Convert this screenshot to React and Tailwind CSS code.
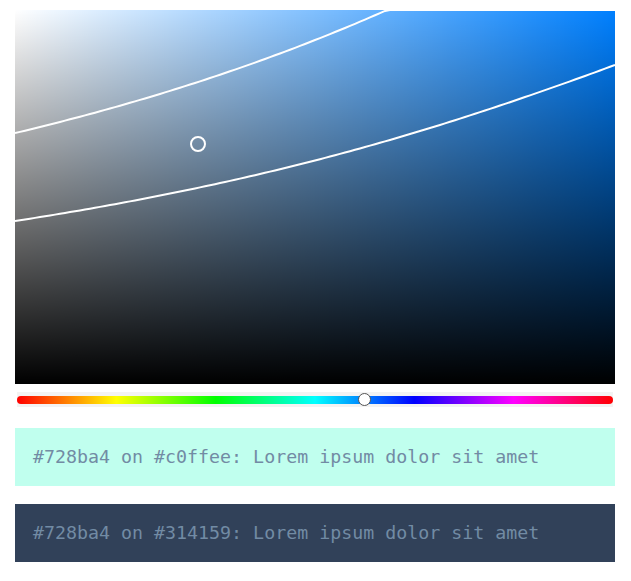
import React from "react";

const W = 600;
const H = 374;
const HUE = 210;

function lin(c) {
  return c <= 0.04045 ? c / 12.92 : Math.pow((c + 0.055) / 1.055, 2.4);
}
function lum(r, g, b) {
  return 0.2126 * lin(r) + 0.7152 * lin(g) + 0.0722 * lin(b);
}
function hsv(h, s, v) {
  const f = (n) => {
    const k = (n + h / 60) % 6;
    return v - v * s * Math.max(0, Math.min(k, 4 - k, 1));
  };
  return [f(5), f(3), f(1)];
}
const Lt = lum(0x72 / 255, 0x8b / 255, 0xa4 / 255);

function curve(target) {
  const pts = [];
  for (let i = 0; i <= 120; i++) {
    const s = i / 120;
    let lo = 0, hi = 1;
    for (let k = 0; k < 40; k++) {
      const m = (lo + hi) / 2;
      const [r, g, b] = hsv(HUE, s, m);
      if (lum(r, g, b) < target) lo = m;
      else hi = m;
    }
    const v = (lo + hi) / 2;
    pts.push([s * W, (1 - v) * H]);
  }
  return "M" + pts.map((p) => p[0].toFixed(2) + " " + p[1].toFixed(2)).join(" L");
}

const upper = curve(1.54 * (Lt + 0.05) - 0.05);
const lower = curve((Lt + 0.05) / 1.42 - 0.05);

export default function App() {
  return (
    <div className="w-[631px] pt-[10px] pl-[15px]" style={{ fontFamily: "'DejaVu Sans Mono', monospace" }}>
      <div className="relative w-[600px] h-[374px] bg-[#0080ff]">
        <div className="absolute inset-0 bg-[linear-gradient(to_right,#ffffff,rgba(255,255,255,0))]" />
        <div className="absolute inset-0 bg-[linear-gradient(to_bottom,rgba(0,0,0,0),#000000)]" />
        <svg className="absolute inset-0" width="600" height="374" viewBox="0 0 600 374">
          <path d={upper} fill="none" stroke="#ffffff" strokeWidth="2" />
          <path d={lower} fill="none" stroke="#ffffff" strokeWidth="2" />
        </svg>
        <div className="absolute left-[175px] top-[126px] w-4 h-4 rounded-full border-2 border-white" />
      </div>

      <div className="mt-2 ml-[2px] w-[596px] h-[15px] bg-[#f3f3f3] relative flex items-center">
        <div className="w-full h-2 rounded-full bg-[linear-gradient(to_right,#ff0000,#ffff00,#00ff00,#00ffff,#0000ff,#ff00ff,#ff0000)]" />
        <div className="absolute left-[341px] top-[1px] w-[13px] h-[13px] rounded-full bg-white border border-[#555555]" />
      </div>

      <div className="mt-[21px] w-[600px] h-[58px] bg-[#c0ffee] flex items-center pl-[18px] text-[#728ba4] text-[18.3px] whitespace-pre">
        #728ba4 on #c0ffee: Lorem ipsum dolor sit amet
      </div>
      <div className="mt-[18px] w-[600px] h-[58px] bg-[#314159] flex items-center pl-[18px] text-[#728ba4] text-[18.3px] whitespace-pre">
        #728ba4 on #314159: Lorem ipsum dolor sit amet
      </div>
    </div>
  );
}
